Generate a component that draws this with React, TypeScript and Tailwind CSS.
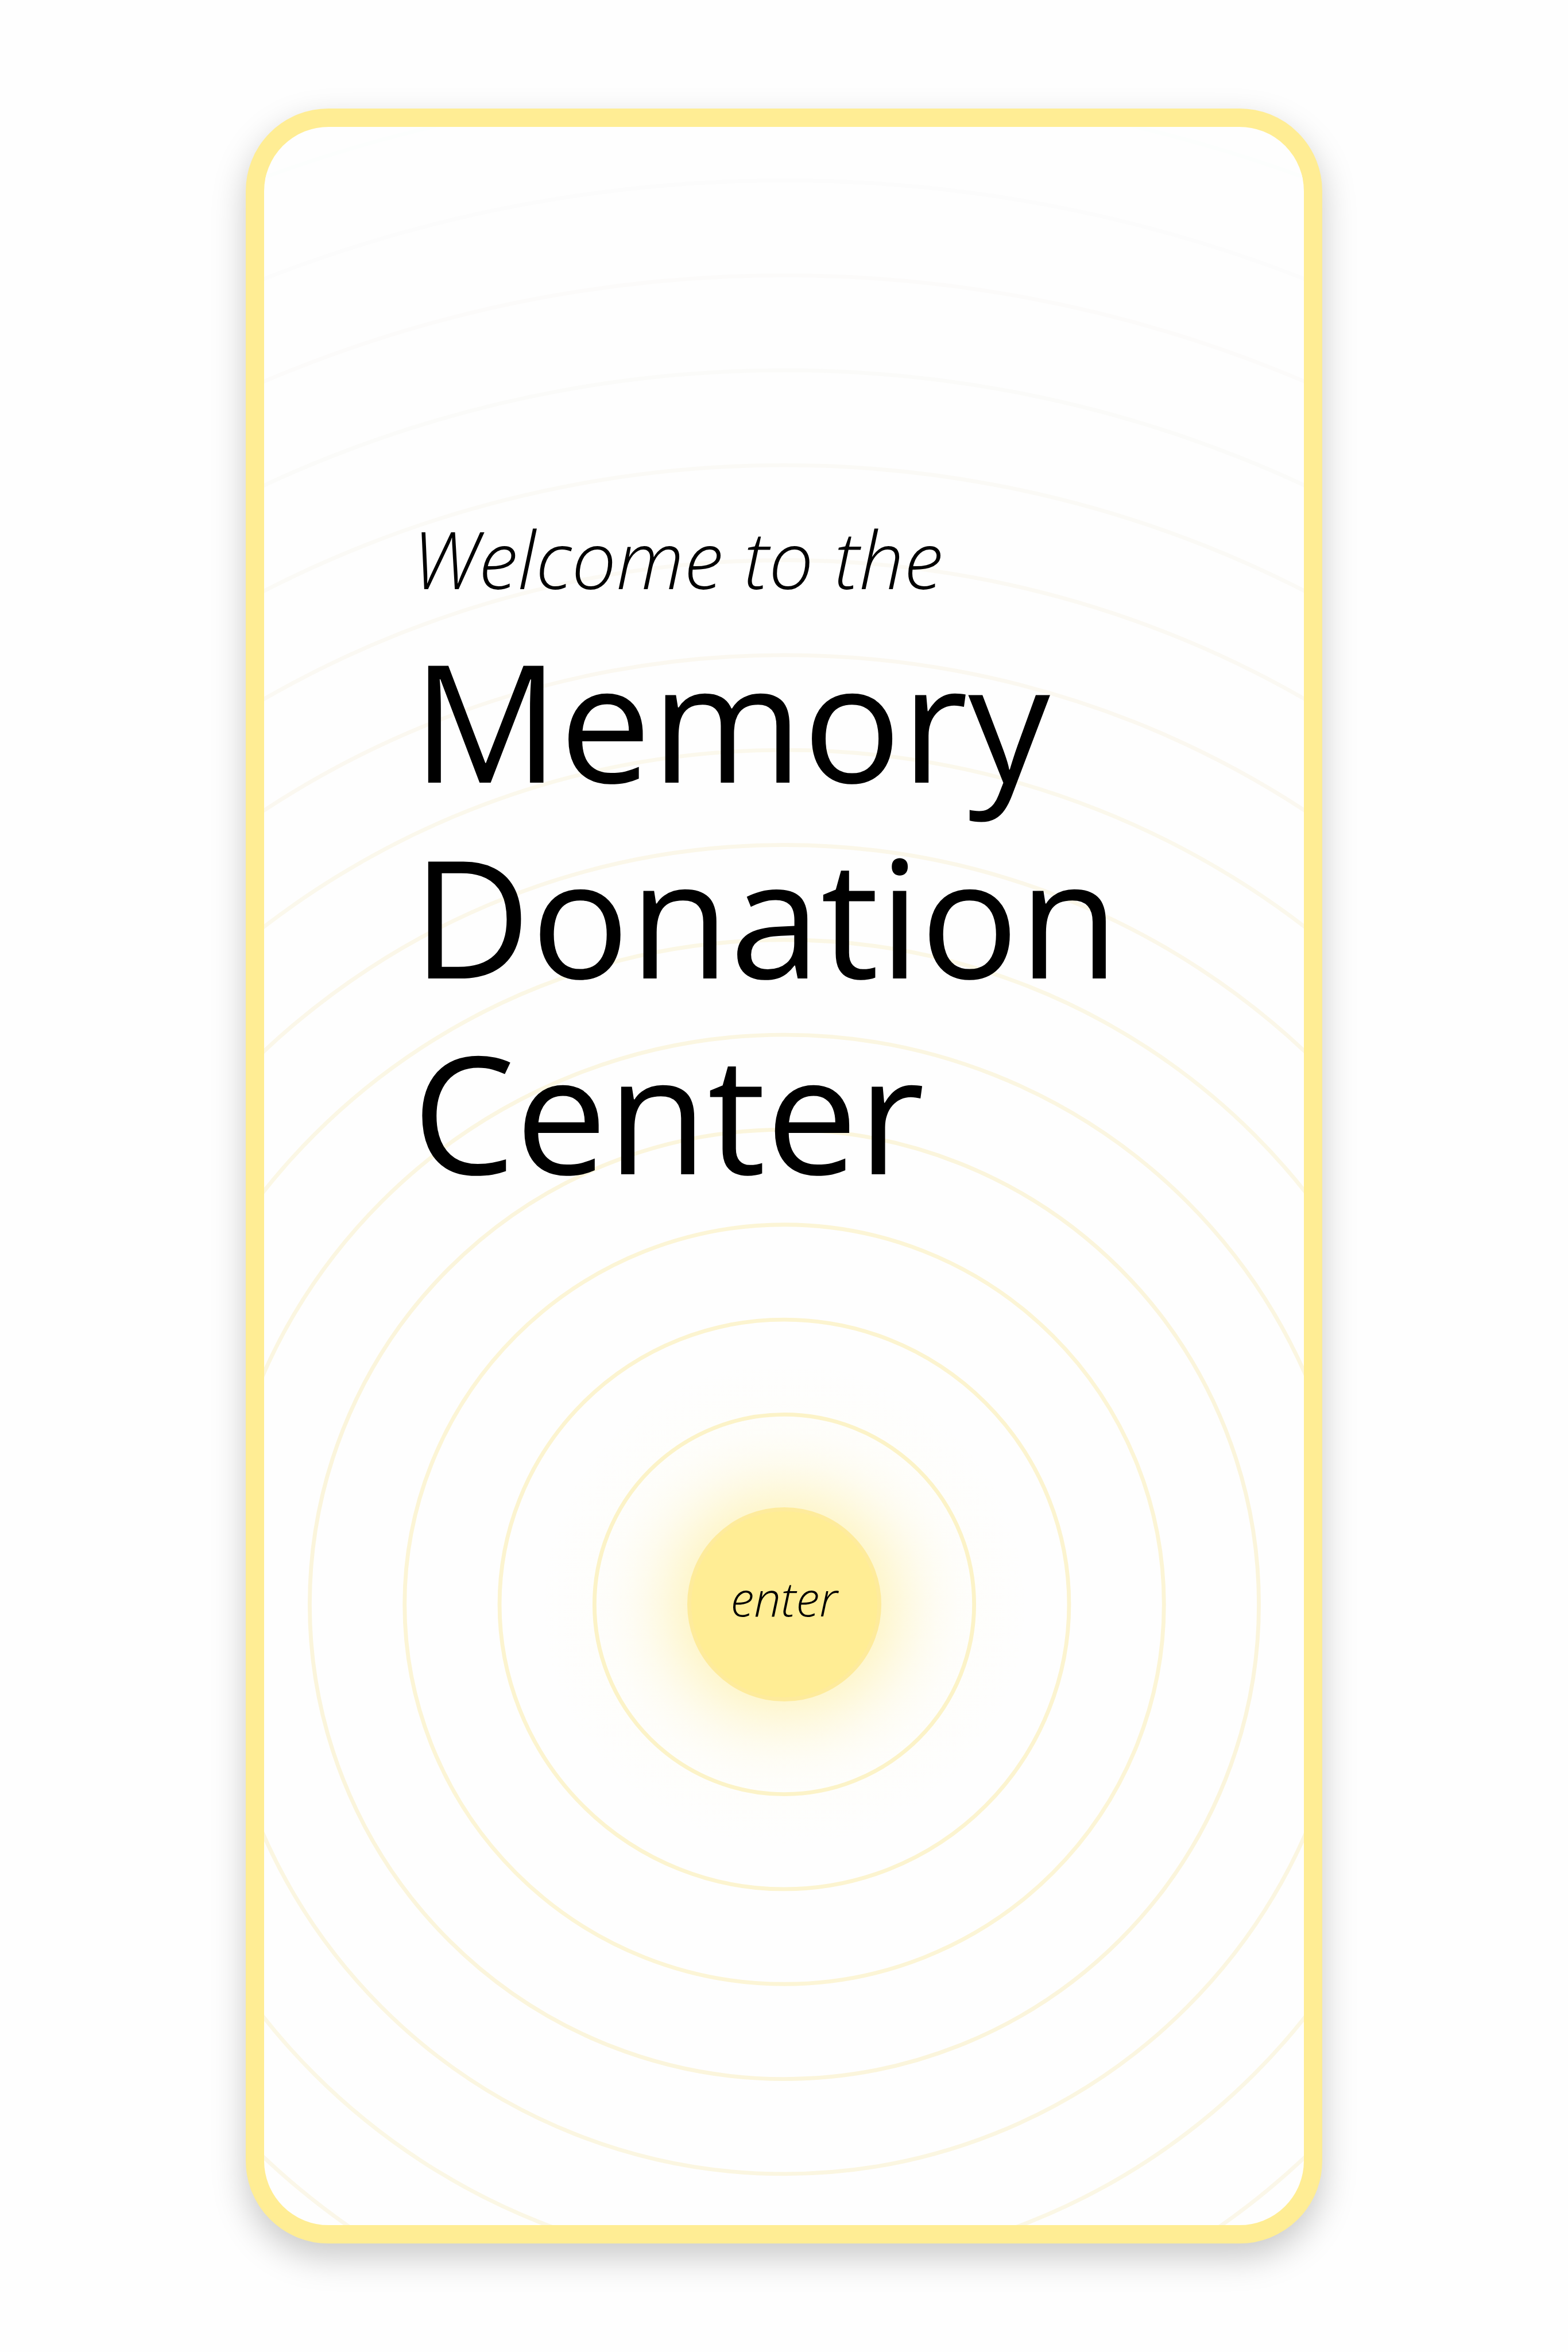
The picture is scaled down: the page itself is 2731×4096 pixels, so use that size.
// Stroke colours of the concentric rings, from the innermost outwards.
const RING_COLORS = [
  "#fcf3c8",
  "#fcf4d0",
  "#fcf5d6",
  "#fbf5dc",
  "#fbf6e1",
  "#fbf7e5",
  "#fbf7e9",
  "#fbf8ec",
  "#fbf8f0",
  "#fbf9f3",
  "#fbfaf6",
  "#fbfbf9",
  "#fcfbfa",
  "#fcfcfc",
  "#fcfefd",
];

const FIRST_RADIUS = 436;
const RING_STEP = 218;

// Falloff of the glow around the button: [offset, opacity].
const GLOW_STOPS = [
  [0.39, 0.46],
  [0.44, 0.37],
  [0.51, 0.25],
  [0.58, 0.15],
  [0.64, 0.09],
  [0.71, 0.045],
  [0.79, 0.025],
  [1, 0],
];

function Ripples() {
  return (
    <svg
      aria-hidden="true"
      viewBox="-3600 -3600 7200 7200"
      className="pointer-events-none absolute top-1/2 left-1/2 -z-10 size-[5460px] max-w-none -translate-x-1/2 -translate-y-1/2"
      fill="none"
      strokeWidth="9"
    >
      <defs>
        <radialGradient id="glow" gradientUnits="userSpaceOnUse" cx="0" cy="0" r="560">
          {GLOW_STOPS.map(([offset, opacity]) => (
            <stop key={offset} offset={offset} stopColor="#ffed94" stopOpacity={opacity} />
          ))}
        </radialGradient>
      </defs>
      <circle r="560" fill="url(#glow)" />
      {RING_COLORS.map((color, i) => (
        <circle key={color} r={FIRST_RADIUS + i * RING_STEP} stroke={color} />
      ))}
    </svg>
  );
}

export default function App() {
  return (
    <main className="flex min-h-screen bg-[#fefefe] px-[428px] py-[189px] font-['Open_Sans',sans-serif] text-black">
      <section className="relative isolate flex flex-1 flex-col overflow-hidden rounded-[144px] border-[32px] border-[#ffed94] bg-[#fefefe] pt-[666px] shadow-[0_24px_60px_rgba(0,0,0,0.21)]">
        <header className="flex flex-col gap-6 pl-[258px]">
          <p className="text-[138px] leading-[171px] font-light italic">Welcome to the</p>
          <h1 className="text-[285px] leading-[341px] font-normal">
            Memory
            <br />
            Donation
            <br />
            Center
          </h1>
        </header>
        <div className="relative mt-[520px] self-center">
          <Ripples />
          <button
            type="button"
            className="block size-[338px] cursor-pointer rounded-full border-[7px] border-[#feeb9c] bg-[#ffed94] pb-[22px] text-[83px] font-light italic"
          >
            enter
          </button>
        </div>
      </section>
    </main>
  );
}
